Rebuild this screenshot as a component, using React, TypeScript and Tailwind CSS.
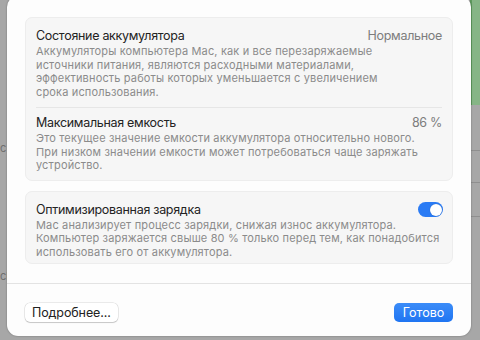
import React from "react";

const font = { fontFamily: "Inter, 'Noto Sans', 'Liberation Sans', sans-serif" };

function Row({ title, value, desc, toggle, pt = "pt-[10px]", pb = "pb-[8px]" }: { title: string; value?: string; desc: string[]; toggle?: boolean; pt?: string; pb?: string }) {
  return (
    <div className={`px-[10px] ${pt} ${pb}`}>
      <div className="flex items-center justify-between">
        <div className="text-[12.5px] leading-[16px] text-[#232323] tracking-[-0.3px]">{title}</div>
        {value && <div className="text-[12.5px] leading-[16px] text-[#7d7d7d] tracking-[-0.3px]">{value}</div>}
        {toggle && (
          <div className="w-[25px] h-[15px] rounded-full bg-[#2a7bf4] flex items-center justify-end pr-[1.5px] mr-[-1px]">
            <div className="w-[12px] h-[12px] rounded-full bg-white shadow-[0_0_1px_rgba(0,0,0,0.3)]" />
          </div>
        )}
      </div>
      <div className="mt-[1px] text-[11px] leading-[13.5px] text-[#8b8b8b] tracking-[0.15px]">
        {desc.map((l, i) => (
          <div key={i} className="whitespace-nowrap">{l}</div>
        ))}
      </div>
    </div>
  );
}

export default function App() {
  return (
    <div className="relative w-[480px] h-[340px] overflow-hidden bg-[#a7a7a7]" style={font}>
      {/* background strips */}
      <div className="absolute left-0 top-[140px] text-[11px] text-[#6f6f6f]">c</div>
      <div className="absolute left-0 top-[268px] text-[11px] text-[#6f6f6f]">cl</div>
      <div className="absolute right-0 top-0 w-[10px] h-[105px] bg-[#86b586] border-l-[2px] border-[#5f9b5f]" />
      <div className="absolute right-0 top-[150px] w-[9px] h-px bg-[#8f8f8f]" />
      <div className="absolute right-0 top-[182px] w-[9px] h-px bg-[#8f8f8f]" />
      <div className="absolute right-0 top-[216px] w-[9px] h-px bg-[#8f8f8f]" />

      <div className="absolute left-[7px] top-[-4px] w-[464px] h-[340px] rounded-[11px] bg-[#fdfdfd] shadow-[0_0_2px_rgba(0,0,0,0.35)] flex flex-col">
        <div className="px-[18px] pt-[21px] flex flex-col gap-[10px]">
          <div className="rounded-[7px] bg-[#f6f6f6] border border-[#ededed]">
            <Row
              title="Состояние аккумулятора"
              value="Нормальное"
              desc={[
                "Аккумуляторы компьютера Mac, как и все перезаряжаемые",
                "источники питания, являются расходными материалами,",
                "эффективность работы которых уменьшается с увеличением",
                "срока использования.",
              ]}
            />
            <div className="mx-[10px] h-px bg-[#e6e6e6]" />
            <Row
              title="Максимальная емкость"
              value="86 %"
              pt="pt-[7px]"
              pb="pb-[7px]"
              desc={[
                "Это текущее значение емкости аккумулятора относительно нового.",
                "При низком значении емкости может потребоваться чаще заряжать",
                "устройство.",
              ]}
            />
          </div>
          <div className="rounded-[7px] bg-[#f6f6f6] border border-[#ededed]">
            <Row
              title="Оптимизированная зарядка"
              toggle
              pb="pb-[4px]"
              desc={[
                "Mac анализирует процесс зарядки, снижая износ аккумулятора.",
                "Компьютер заряжается свыше 80 % только перед тем, как понадобится",
                "использовать его от аккумулятора.",
              ]}
            />
          </div>
        </div>
        <div className="mt-[19px] h-px bg-[#e3e3e3]" />
        <div className="px-[18px] pt-[19px] flex items-center justify-between">
          <div className="h-[19px] px-[7px] rounded-[5px] bg-white shadow-[0_0_0_0.5px_rgba(0,0,0,0.15),0_1px_1px_rgba(0,0,0,0.15)] text-[12.5px] leading-[19px] text-[#222] tracking-[-0.1px]">
            Подробнее...
          </div>
          <div className="h-[19px] w-[59px] rounded-[5px] bg-gradient-to-b from-[#3b8cf8] to-[#1f75f2] text-center text-[12.5px] leading-[19px] text-white">
            Готово
          </div>
        </div>
      </div>
    </div>
  );
}
